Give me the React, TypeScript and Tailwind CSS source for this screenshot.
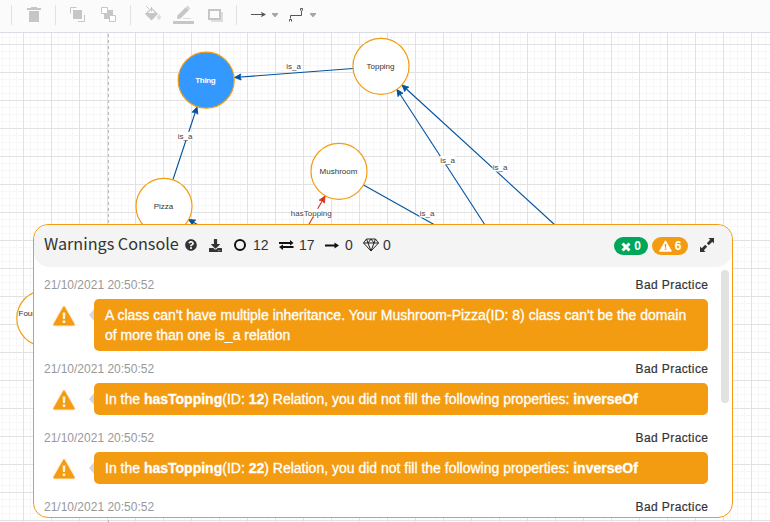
import React from "react";
import { FaQuestionCircle, FaDownload } from "react-icons/fa";

const BLUE = "#00529f";
const ORANGE = "#f39c12";

type Edge = { from: [number, number]; to: [number, number]; color?: string };

const edges: Edge[] = [
  { from: [353, 68.5], to: [234.5, 77.5] },
  { from: [173, 179.5], to: [197, 107] },
  { from: [485, 225], to: [397, 89.5] },
  { from: [555, 225], to: [402, 85] },
  { from: [200, 226], to: [188.5, 219.5] },
  { from: [308.5, 225], to: [325, 196], color: "#d63222" },
];

const labels: { text: string; x: number; y: number; w: number }[] = [
  { text: "is_a", x: 293.5, y: 66.5, w: 15 },
  { text: "is_a", x: 185, y: 136.3, w: 15 },
  { text: "is_a", x: 447.5, y: 160.5, w: 15 },
  { text: "is_a", x: 500, y: 167.5, w: 15 },
  { text: "is_a", x: 427, y: 213.5, w: 15 },
  { text: "hasTopping", x: 311.3, y: 213.3, w: 39 },
];

const nodes = [
  { text: "Topping", x: 381, y: 66.3 },
  { text: "Mushroom", x: 339, y: 171.3 },
  { text: "Pizza", x: 164, y: 206.3 },
];

function ArrowEdge({ from, to, color = BLUE }: Edge) {
  const angle = (Math.atan2(to[1] - from[1], to[0] - from[0]) * 180) / Math.PI;
  return (
    <g>
      <line x1={from[0]} y1={from[1]} x2={to[0]} y2={to[1]} stroke={color} strokeWidth="1.1" />
      <path d="M0 0L-6.5 -3L-5.5 0L-6.5 3Z" fill={color} stroke={color} strokeWidth=".8" transform={`translate(${to[0]} ${to[1]}) rotate(${angle})`} />
    </g>
  );
}

function Diagram() {
  return (
    <svg className="absolute left-0 top-0" width="770" height="522" viewBox="0 0 770 522" fontFamily='"Liberation Sans", Arial, sans-serif' fontSize="8">
      <defs>
        <pattern id="grid" width="28" height="28" x="23" y="16" patternUnits="userSpaceOnUse">
          <path d="M7.5 0V28M14.5 0V28M21.5 0V28M0 7.5H28M0 14.5H28M0 21.5H28" stroke="#f7f7f7" />
          <path d="M.5 0V28M0 .5H28" stroke="#e2e2e2" />
        </pattern>
      </defs>
      <rect width="770" height="522" fill="#fff" />
      <rect width="770" height="522" fill="url(#grid)" />
      <path d="M108.5 34V522" stroke="#bababa" strokeDasharray="3 3" />
      {edges.map((e, i) => <ArrowEdge key={i} {...e} />)}
      <path d="M363.5 185L434 224.5" stroke={BLUE} strokeWidth="1.1" />
      {labels.map((l, i) => (
        <g key={i}>
          <rect x={l.x - l.w / 2} y={l.y - 4.5} width={l.w} height="8.5" fill="#fff" />
          <text x={l.x} y={l.y + 2.5} textAnchor="middle" fill="#444">{l.text}</text>
        </g>
      ))}
      <circle cx="206.2" cy="80.2" r="28" fill="#3399ff" stroke={ORANGE} strokeWidth="1.2" />
      <text x="205.5" y="83" textAnchor="middle" fill="#fff" fontWeight="bold" textLength="20.5">Thing</text>
      {nodes.map((n) => (
        <g key={n.text}>
          <circle cx={n.x} cy={n.y} r="28" fill="#fff" stroke={ORANGE} strokeWidth="1.2" />
          <text x={n.x - 0.5} y={n.y + 2.7} textAnchor="middle" fill="#333">{n.text}</text>
        </g>
      ))}
      <circle cx="44.8" cy="318.3" r="28" fill="#fff" stroke={ORANGE} strokeWidth="1.2" />
      <text x="18.5" y="316" fill="#333">Four</text>
    </svg>
  );
}

function Caret() {
  return <svg width="6" height="4" className="mt-px"><path d="M0 0H6V1L3.5 4H2.5L0 1Z" fill="#a5a5a5" /></svg>;
}

function Separator({ className }: { className: string }) {
  return <div className={`h-5 w-px bg-[#e2e2e2] ${className}`} />;
}

function Toolbar() {
  return (
    <div className="relative flex h-[33px] items-start border-b border-[#dadbe4] bg-[#fbfbfb] pt-[5px]">
      <Separator className="ml-[11px]" />
      <svg className="ml-[15px] mt-0.5" width="14" height="16" fill="#c6c6c6"><path d="M0 1H4V0H10V1H14V3H0ZM2 4H12V15H2Z" /></svg>
      <Separator className="ml-[14px]" />
      <svg className="ml-[14px] mt-0.5" width="15" height="15"><path d="M3 3H12V12H3Z" fill="#c6c6c6" /><path d="M.5 6.5V.5H6.5M8 14.5H14.5V8" fill="none" stroke="#c6c6c6" /></svg>
      <svg className="ml-4 mt-0.5" width="15" height="15"><path d="M3 3H12V12H3Z" fill="#c6c6c6" /><path d="M.5 .5H6.5V6.5H.5ZM8.5 8.5H14.5V14.5H8.5Z" fill="#fff" stroke="#c6c6c6" /></svg>
      <Separator className="ml-[14px]" />
      <svg className="ml-3.5 mt-px" width="17" height="15">
        <path d="M1 0L4 3" stroke="#c6c6c6" fill="none" />
        <path d="M6.5 1.5L13 8L6.5 14.5L0 8Z" fill="#c6c6c6" />
        <path d="M6.5 3L10 7H3Z" fill="#fbfbfb" />
        <path d="M6.5 1V5.5" stroke="#c6c6c6" />
        <path d="M14 8L15.7 10.5A2 2 0 1 1 12.3 10.5Z" fill="#dedede" />
      </svg>
      <svg className="ml-[11px]" width="21" height="20">
        <path d="M4 14L4.5 10.5L13 2L16 5L7.5 13.5Z" fill="#c6c6c6" /><path d="M13.5 1.5L14.5 .8L17.2 3.5L16.5 4.5Z" fill="#c6c6c6" />
        <path d="M10 13.5H18" stroke="#dedede" /><path d="M0 16H21V19H0Z" fill="#c6c6c6" />
      </svg>
      <svg className="ml-3.5 mt-1" width="15" height="13"><path d="M3 3H15V13H3Z" fill="#dedede" /><path d="M1 1H12V10H1Z" fill="#fbfbfb" stroke="#c6c6c6" strokeWidth="2" /></svg>
      <Separator className="ml-[13px]" />
      <div className="ml-3.5 flex h-[19px] items-center gap-1.5">
        <svg width="15" height="7"><path d="M0 3.5H14" stroke="#555" /><path d="M10 .8L15 3.5L10 6.2L11 3.5Z" fill="#555" /></svg>
        <Caret />
      </div>
      <div className="ml-[11px] flex h-[19px] items-center gap-1.5">
        <svg width="15" height="14" className="-mb-px"><path d="M1.5 10.5V7.5H12.5V2.5M.5 13.5V11.5H2.5V13.5M11.5 2.5V.5H13.5V2.5" fill="none" stroke="#555" /></svg>
        <Caret />
      </div>
    </div>
  );
}

function WarningIcon({ className }: { className: string }) {
  return (
    <svg className={className} viewBox="0 0 22 20">
      <path d="M11 1.2L21 18.8H1Z" fill="currentColor" stroke="currentColor" strokeWidth="1.6" strokeLinejoin="round" />
      <path d="M9.6 6.5H12.4L12 13H10ZM9.7 14.4H12.3V16.9H9.7Z" className="fill-(--mark)" />
    </svg>
  );
}

function ConsoleHeader() {
  return (
    <header className="flex h-[42px] items-center rounded-[15px] bg-[#f4f4f4] pb-0.5 pl-2.5 text-sm text-[#333]">
      <h3 className="w-[135px] whitespace-nowrap pb-1 font-['Noto_Sans_CJK_SC',sans-serif] text-[16.2px] leading-5 text-[#333]">Warnings Console</h3>
      <FaQuestionCircle className="ml-[6px] size-3 text-[#333]" />
      <FaDownload className="ml-3 size-[13px] text-[#333]" />
      <svg className="ml-3" width="12" height="12"><circle cx="6" cy="6" r="5" fill="none" stroke="#111" strokeWidth="2" /></svg>
      <span className="ml-[7px] w-4">12</span>
      <svg className="ml-[10px]" width="15" height="10" fill="#111"><path d="M0 2H11V0L14.5 3L11 5.5V4H0ZM14.5 6H4V4.5L0 7L4 10V8H14.5Z" /></svg>
      <span className="ml-[5px] w-4">17</span>
      <svg className="ml-[10px]" width="14" height="7"><path d="M0 3.5H11" stroke="#111" strokeWidth="2" /><path d="M9.5 .5L14 3.5L9.5 6.5Z" fill="#111" /></svg>
      <span className="ml-1.5 w-2">0</span>
      <svg className="ml-2.5" width="16" height="14" fill="none" stroke="#222"><path d="M3.5 1H12.5L15.5 5L8 13L.5 5ZM.5 5H15.5M5 5L8 13L11 5M3.5 1L5 5L8 1L11 5L12.5 1" /></svg>
      <span className="ml-1 w-2">0</span>
      <span className="ml-auto mt-0.5 flex h-[18px] w-[34px] items-center justify-center gap-[3px] rounded-full bg-[#00a65a] text-xs font-bold text-white">
        <svg width="10" height="10" className="mt-px"><path d="M1.5 1.5L8.5 8.5M8.5 1.5L1.5 8.5" stroke="#fff" strokeWidth="3" /></svg>0
      </span>
      <span className="ml-1 mt-0.5 flex h-[18px] w-9 items-center justify-center gap-[3px] rounded-full bg-[#f39c12] text-xs font-bold text-white">
        <WarningIcon className="h-3 w-[13px] [--mark:#f39c12]" />6
      </span>
      <svg className="ml-3 mr-[18px]" width="14" height="14" fill="#333"><path d="M8.5 0H14V5.5L12.3 3.8L8.8 7.2L6.8 5.2L10.2 1.7ZM0 8.5L1.7 10.2L5.2 6.8L7.2 8.8L3.8 12.3L5.5 14H0Z" /></svg>
    </header>
  );
}

function MessageInfo() {
  return (
    <div className="mb-1 flex h-5 items-center justify-between text-xs">
      <time className="text-[#999]">21/10/2021 20:50:52</time>
      <span className="-mr-[0.4px] tracking-[0.4px] text-[#333] [-webkit-text-stroke:0.2px_#333]">Bad Practice</span>
    </div>
  );
}

function Message({ children }: { children: React.ReactNode }) {
  return (
    <article className="mb-2">
      <MessageInfo />
      <div className="flex min-h-[37px] items-start">
        <WarningIcon className="ml-[9px] mt-[7px] h-5 w-[22px] shrink-0 text-[#f39c12] drop-shadow-[0_0_1px_#f39c1280] [--mark:#fff3dc]" />
        <div className="ml-3.5 mt-2.5 border-y-[6px] border-r-[5px] border-y-transparent border-r-[#d2d6de]" />
        <p className="flex-1 rounded-[5px] bg-[#f39c12] px-[11px] py-1.5 text-sm leading-5 text-white [-webkit-text-stroke:0.3px_white]">{children}</p>
      </div>
    </article>
  );
}

export default function App() {
  return (
    <main className="relative h-[522px] w-[770px] overflow-hidden bg-white font-['Liberation_Sans',Arial,sans-serif]">
      <Diagram />
      <Toolbar />
      <section className="absolute left-[33px] top-[224px] flex h-[294px] w-[700px] flex-col overflow-hidden rounded-[15px] border border-[#f39c12] bg-white">
        <ConsoleHeader />
        <div className="flex min-h-0 flex-1 overflow-hidden">
          <div className="w-[674px] pl-2.5 pt-2">
            <Message>A class can't have multiple inheritance. Your Mushroom-Pizza(ID: 8) class can't be the domain of more than one is_a relation</Message>
            <Message>In the <b>hasTopping</b>(ID: <b>12</b>) Relation, you did not fill the following properties: <b>inverseOf</b></Message>
            <Message>In the <b>hasTopping</b>(ID: <b>22</b>) Relation, you did not fill the following properties: <b>inverseOf</b></Message>
            <MessageInfo />
          </div>
          <div className="ml-[13px] mt-[3px] h-[133px] w-2 rounded-full bg-[#e2e2e2]" />
        </div>
      </section>
    </main>
  );
}
